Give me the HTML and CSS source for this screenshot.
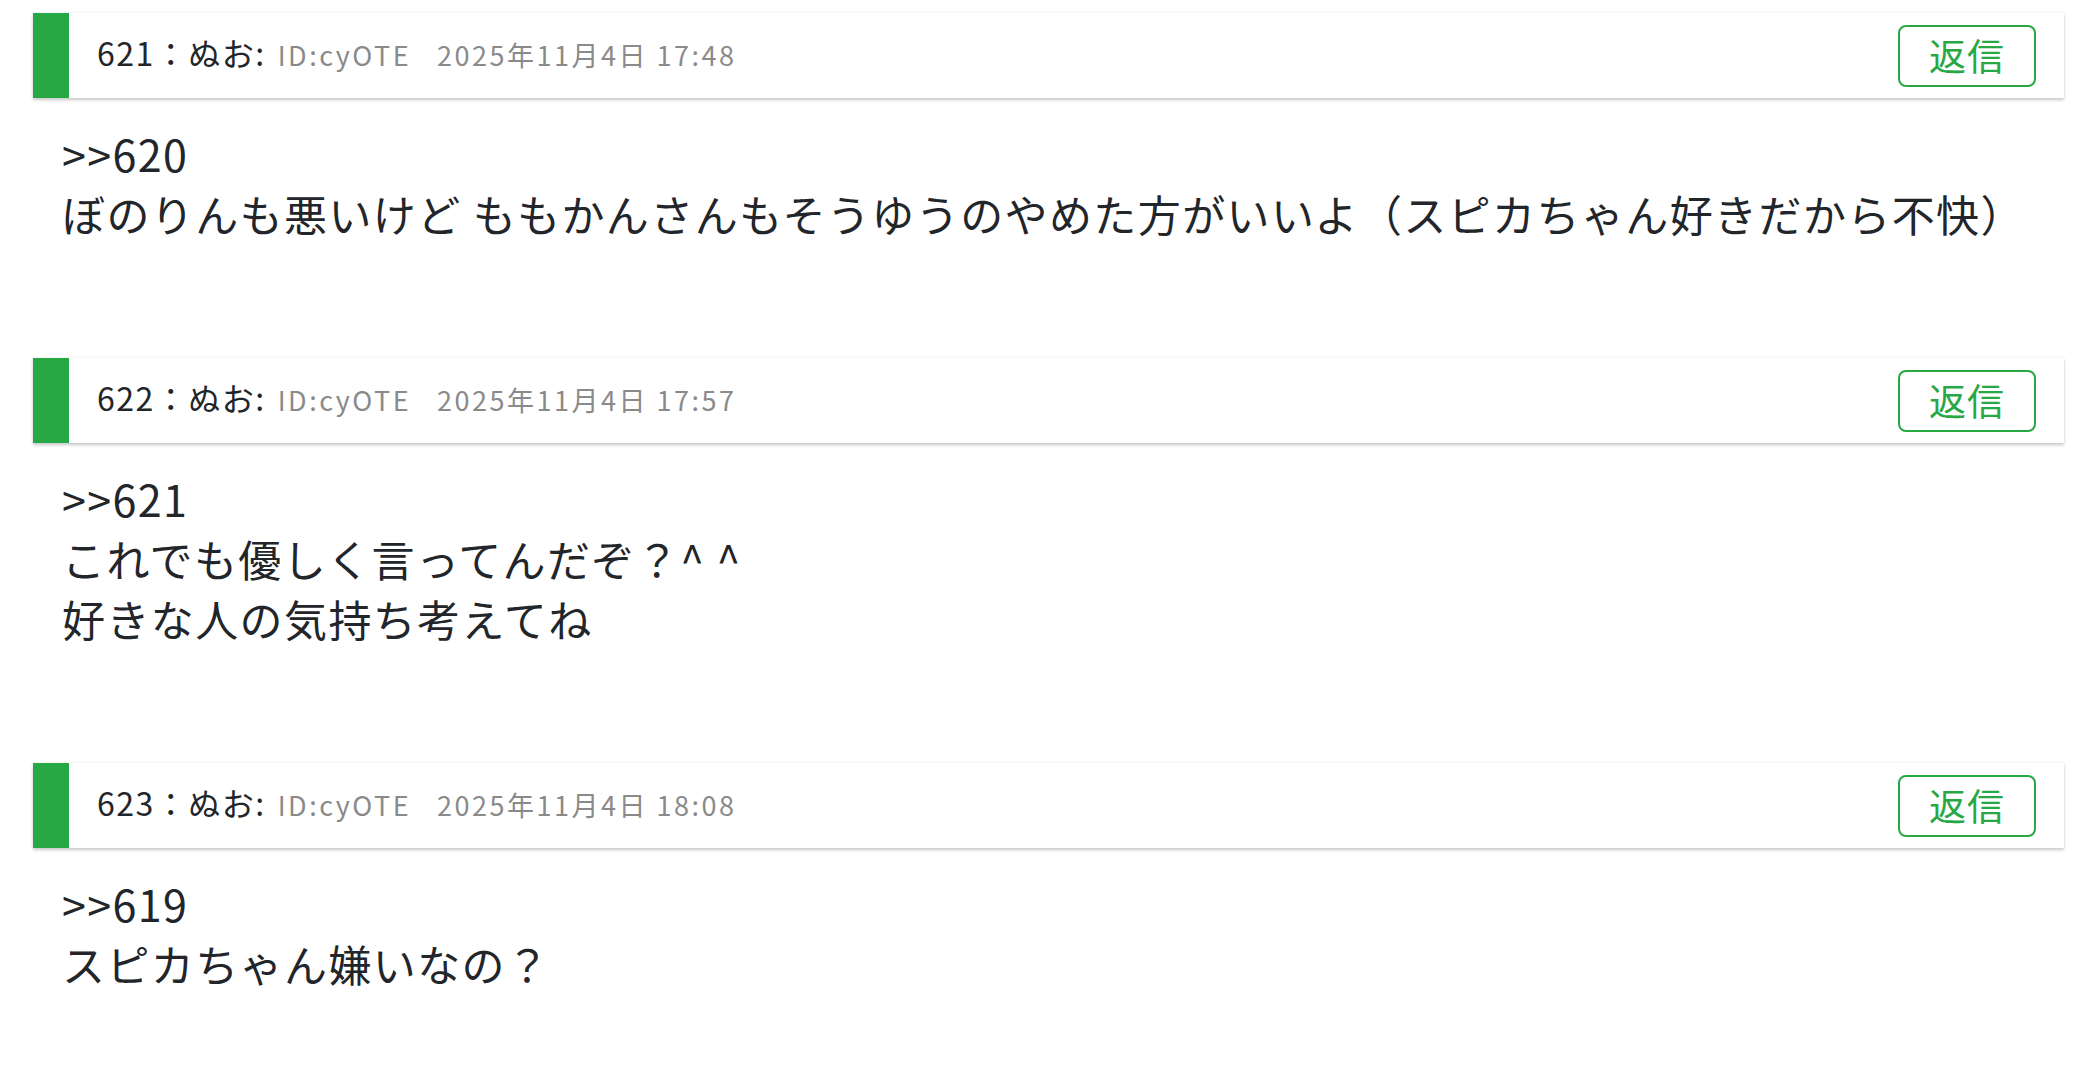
FILE: index.html
```html
<!DOCTYPE html>
<html lang="ja">
<head>
<meta charset="utf-8">
<title>スレッド</title>
<link rel="stylesheet" href="styles.css">
</head>
<body>
<div class="thread">
  <article class="post">
    <header class="post-head">
      <div class="meta">
        <span class="num">621：ぬお:</span>
        <span class="uid">ID:cyOTE</span>
        <span class="date">2025年11月4日 17:48</span>
      </div>
      <button class="reply">返信</button>
    </header>
    <div class="post-body">
      <div>&gt;&gt;620</div>
      <div>ぼのりんも悪いけど ももかんさんもそうゆうのやめた方がいいよ（スピカちゃん好きだから不快）</div>
    </div>
  </article>
  <article class="post">
    <header class="post-head">
      <div class="meta">
        <span class="num">622：ぬお:</span>
        <span class="uid">ID:cyOTE</span>
        <span class="date">2025年11月4日 17:57</span>
      </div>
      <button class="reply">返信</button>
    </header>
    <div class="post-body">
      <div>&gt;&gt;621</div>
      <div>これでも優しく言ってんだぞ？^ ^</div>
      <div>好きな人の気持ち考えてね</div>
    </div>
  </article>
  <article class="post">
    <header class="post-head">
      <div class="meta">
        <span class="num">623：ぬお:</span>
        <span class="uid">ID:cyOTE</span>
        <span class="date">2025年11月4日 18:08</span>
      </div>
      <button class="reply">返信</button>
    </header>
    <div class="post-body">
      <div>&gt;&gt;619</div>
      <div>スピカちゃん嫌いなの？</div>
    </div>
  </article>
</div>
</body>
</html>
```
FILE: styles.css
```css
html, body {
  margin: 0;
  background: #ffffff;
}
body {
  font-family: "Noto Sans CJK JP", "Noto Sans", sans-serif;
  color: #222529;
}
.thread {
  padding: 13px 28px 0 33px;
}
.post-head {
  display: flex;
  align-items: center;
  justify-content: space-between;
  height: 85px;
  box-sizing: border-box;
  border-left: 36px solid #28a745;
  padding: 0 28px 0 28px;
  background: #fff;
  box-shadow: 0 2px 3px rgba(0, 0, 0, 0.22), 0 -1px 2px rgba(0, 0, 0, 0.04);
}
.meta {
  display: flex;
  align-items: baseline;
  white-space: nowrap;
  margin-bottom: 8px;
}
.num {
  font-size: 32px;
  letter-spacing: 1.5px;
  color: #222529;
}
.uid {
  font-size: 27px;
  letter-spacing: 2.5px;
  color: #8a8a8a;
  margin-left: 12px;
}
.date {
  font-size: 27px;
  letter-spacing: 2.5px;
  color: #8a8a8a;
  margin-left: 26px;
}
.reply {
  width: 138px;
  height: 62px;
  box-sizing: border-box;
  border: 2px solid #28a745;
  border-radius: 8px;
  background: #fff;
  color: #28a745;
  font-family: "Noto Sans CJK JP", sans-serif;
  font-size: 37px;
  letter-spacing: 1px;
  line-height: 1;
  padding: 0;
}
.post-body {
  padding: 25px 0 115px 29px;
  font-size: 43px;
  letter-spacing: 1.4px;
  line-height: 60px;
}
```
